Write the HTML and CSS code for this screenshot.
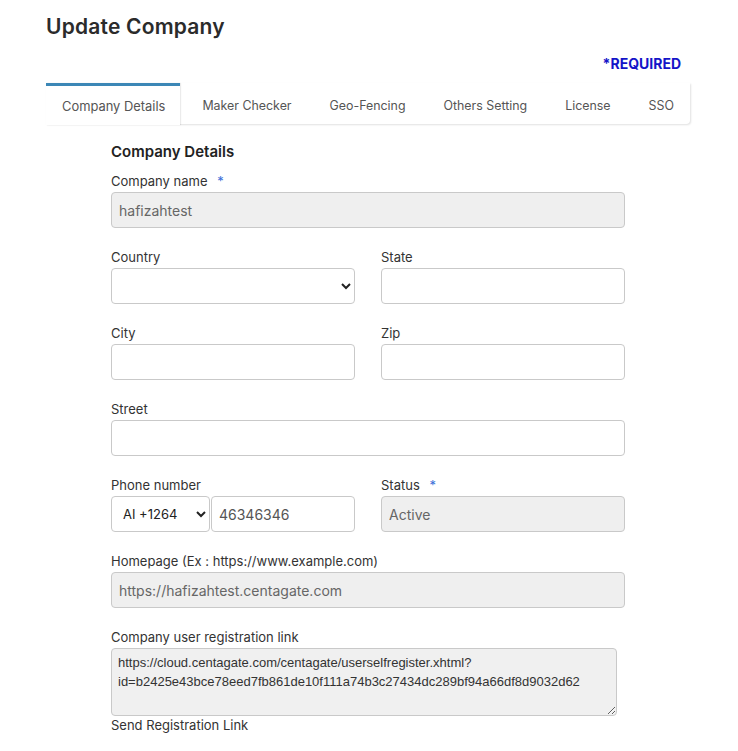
FILE: index.html
```html
<!DOCTYPE html>
<html>
<head>
<meta charset="utf-8">
<link rel="stylesheet" href="styles.css">
</head>
<body>
<div class="page">
  <h1 class="title">Update Company</h1>
  <div class="required-row"><span class="required">*REQUIRED</span></div>
  <div class="tabs">
    <div class="tab active">Company Details</div>
    <div class="tab">Maker Checker</div>
    <div class="tab">Geo-Fencing</div>
    <div class="tab">Others Setting</div>
    <div class="tab">License</div>
    <div class="tab">SSO</div>
  </div>
  <div class="form">
    <h2 class="section">Company Details</h2>
    <div class="field">
      <label class="label">Company name <span class="star">*</span></label>
      <input class="input disabled" type="text" value="hafizahtest" readonly>
    </div>
    <div class="row">
      <div class="field">
        <label class="label">Country</label>
        <select class="input select"><option></option></select>
      </div>
      <div class="field">
        <label class="label">State</label>
        <input class="input" type="text">
      </div>
    </div>
    <div class="row">
      <div class="field">
        <label class="label">City</label>
        <input class="input" type="text">
      </div>
      <div class="field">
        <label class="label">Zip</label>
        <input class="input" type="text">
      </div>
    </div>
    <div class="field">
      <label class="label">Street</label>
      <input class="input" type="text">
    </div>
    <div class="row">
      <div class="field">
        <label class="label">Phone number</label>
        <div class="phone">
          <select class="input select code"><option>AI +1264</option></select>
          <input class="input num" type="text" value="46346346">
        </div>
      </div>
      <div class="field">
        <label class="label">Status <span class="star">*</span></label>
        <input class="input disabled" type="text" value="Active" readonly>
      </div>
    </div>
    <div class="field">
      <label class="label">Homepage (Ex : https://www.example.com)</label>
      <input class="input disabled" type="text" value="https://hafizahtest.centagate.com" readonly>
    </div>
    <div class="field last">
      <label class="label">Company user registration link</label>
      <textarea class="textarea" readonly>https://cloud.centagate.com/centagate/userselfregister.xhtml?id=b2425e43bce78eed7fb861de10f111a74b3c27434dc289bf94a66df8d9032d62</textarea>
      <div class="send">Send Registration Link</div>
    </div>
  </div>
</div>
</body>
</html>
```

FILE: styles.css
```css
* { box-sizing: border-box; }
body {
  margin: 0;
  background: #fff;
  font-family: Inter, "Open Sans", sans-serif;
  color: #333;
}
.page {
  padding-left: 46px;
  width: 690px;
}
.title {
  margin: 12px 0 0 0;
  font-size: 21px;
  line-height: 30px;
  font-weight: 600;
  color: #2b2b2b;
  letter-spacing: 0.2px;
}
.required-row {
  display: flex;
  justify-content: flex-end;
  padding-right: 9px;
  margin-top: 13px;
  height: 28px;
}
.required {
  color: #1414c8;
  font-weight: 700;
  font-size: 14px;
  line-height: 18px;
}
.tabs {
  display: flex;
  gap: 6px;
  height: 41px;
  background: #fff;
  box-shadow: 1px 1px 2px rgba(0,0,0,0.12);
  border-radius: 0 0 4px 0;
}
.tab {
  padding: 0 16px;
  font-size: 12.4px;
  color: #555;
  line-height: 45px;
  white-space: nowrap;
}
.tab.active {
  border-top: 3px solid #3c87b6;
  line-height: 42px;
  font-size: 12.9px;
  box-shadow: 1px 0 1px rgba(0,0,0,0.08);
  position: relative;
  z-index: 1;
  background: #fff;
  height: 42px;
  padding-right: 15px;
}
.form {
  margin-left: 65px;
  width: 514px;
  padding-top: 18px;
}
.section {
  margin: 0 0 10px 0;
  font-size: 15px;
  line-height: 20px;
  font-weight: 600;
  color: #222;
}
.field {
  display: flex;
  flex-direction: column;
  margin-bottom: 20px;
  flex: 1;
  min-width: 0;
}
.row {
  display: flex;
  gap: 26px;
}
.label {
  font-size: 13px;
  line-height: 18px;
  margin-bottom: 2px;
  color: #333;
}
.star {
  color: #3a6fd8;
  margin-left: 6px;
}
.input {
  height: 36px;
  border: 1px solid #c9c9c9;
  border-radius: 4px;
  background: #fff;
  font-family: Inter, "Open Sans", sans-serif;
  font-size: 14px;
  color: #555;
  padding: 0 7px;
  width: 100%;
  outline: none;
}
.input.disabled {
  background: #efefef;
  color: #666;
}
.select {
  padding: 0 6px 0 7px;
  color: #222;
  font-size: 13px;
}
.phone {
  display: flex;
  gap: 1px;
}
.code {
  width: 99px;
  flex: none;
}
.num {
  flex: 1;
}
.textarea {
  height: 68px;
  width: 506px;
  border: 1px solid #c9c9c9;
  border-radius: 4px;
  background: #f0f0f0;
  font-family: "Liberation Sans", Arial, sans-serif;
  font-size: 13px;
  line-height: 19px;
  color: #333;
  padding: 4px 6px;
  outline: none;
}
.send {
  font-size: 13px;
  line-height: 18px;
  color: #333;
  margin-top: 0;
}
```
